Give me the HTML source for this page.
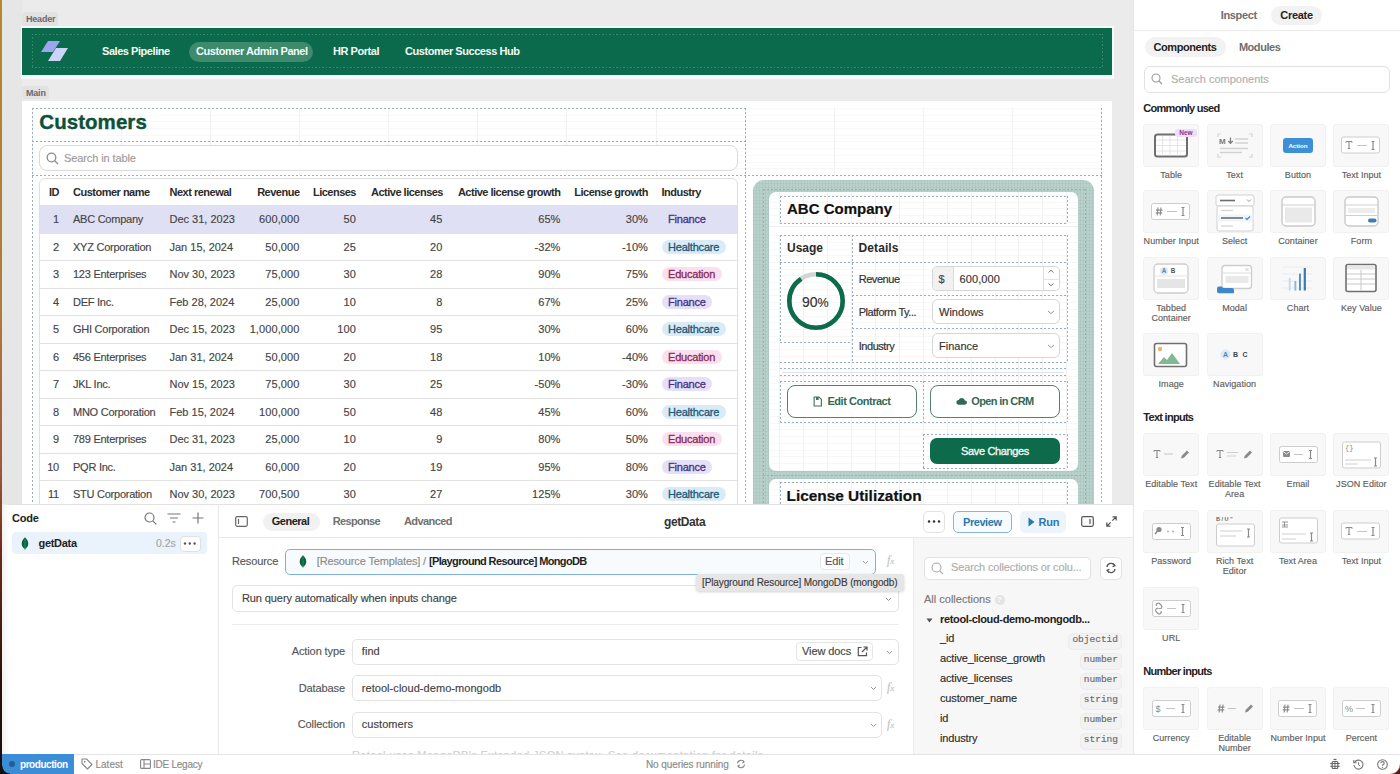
<!DOCTYPE html>
<html><head><meta charset="utf-8">
<style>
*{box-sizing:border-box;margin:0;padding:0}
html,body{width:1400px;height:774px;overflow:hidden;background:#ebebeb;font-family:"Liberation Sans",sans-serif;color:#222;position:relative}
.a{position:absolute}
.t{position:absolute;white-space:nowrap;line-height:1;-webkit-text-stroke:0.15px currentColor}
.hd{font-size:11px;font-weight:bold;color:#2b2b2b;letter-spacing:-0.5px}
.cl{font-size:11px;color:#454545;letter-spacing:-0.2px}
.r{text-align:right}
.tag{-webkit-text-stroke:0.3px currentColor;position:absolute;height:14px;border-radius:7px;font-size:11px;line-height:14px;padding-left:6px;letter-spacing:-0.2px;white-space:nowrap}
.fin{background:#e6e0f6;color:#45318a}
.hea{background:#d8ebf6;color:#1e5878}
.edu{background:#fae0ee;color:#88295a}
.dh{position:absolute;height:1px;background:repeating-linear-gradient(to right,#9ab0c1 0 2px,transparent 2px 4px)}
.dv{position:absolute;width:1px;background:repeating-linear-gradient(to bottom,#9ab0c1 0 2px,transparent 2px 4px)}
.tile{position:absolute;width:56px;height:43px;background:#f8f8f8;border-radius:3.5px;box-shadow:inset 0 0 0 1px #f1f1f1}
.tl{-webkit-text-stroke:0.15px currentColor;position:absolute;width:70px;text-align:center;font-size:9px;line-height:10px;color:#5e5e5e;letter-spacing:0.05px}
.sec{position:absolute;font-size:11px;font-weight:bold;color:#222;letter-spacing:-0.72px;white-space:nowrap;line-height:1}
.hd,.sec,[style*="font-weight:bold"]{-webkit-text-stroke:0 !important}
.t.bs{-webkit-text-stroke:0.35px currentColor !important}
.t.bs2{-webkit-text-stroke:0.2px currentColor !important}
</style></head><body>
<div class="a" style="left:2px;top:0;width:20px;height:504px;background:#e6e6e6"></div>
<div class="a" style="left:22px;top:12px;width:36px;height:14px;background:#e2e2e2;border-radius:3px"></div>
<div class="t" style="left:26px;top:15px;font-size:9px;font-weight:bold;color:#6a6a6a;letter-spacing:-0.2px">Header</div>
<div class="a" style="left:21px;top:26px;width:1093px;height:53px;background:#f4fbf8"></div>
<div class="a" style="left:22px;top:28px;width:1090px;height:47px;background:#0b6a4b"></div>
<div class="a" style="left:32px;top:34px;width:1070px;height:1px;background:repeating-linear-gradient(to right,#3a8a6c 0 1.5px,transparent 1.5px 3.5px)"></div>
<div class="a" style="left:32px;top:67px;width:1070px;height:1px;background:repeating-linear-gradient(to right,#3a8a6c 0 1.5px,transparent 1.5px 3.5px)"></div>
<div class="a" style="left:32px;top:34px;width:1px;height:34px;background:repeating-linear-gradient(to bottom,#3a8a6c 0 1.5px,transparent 1.5px 3.5px)"></div>
<div class="a" style="left:1102px;top:34px;width:1px;height:34px;background:repeating-linear-gradient(to bottom,#3a8a6c 0 1.5px,transparent 1.5px 3.5px)"></div>
<svg class="a" style="left:40px;top:40px" width="30" height="24" viewBox="0 0 30 24">
<polygon points="8,1 20,1 13,12 1,12" fill="#9ba6ef"/><polygon points="16,8 28,8 20,21 8,21" fill="#cdd3f7"/></svg>
<div class="t" style="left:102px;top:46px;font-size:11px;font-weight:bold;color:#f4faf7;letter-spacing:-0.45px">Sales Pipeline</div>
<div class="a" style="left:189px;top:42px;width:124px;height:20px;border-radius:10px;background:#3d8a6d"></div>
<div class="t" style="left:196px;top:46px;font-size:11px;font-weight:bold;color:#f4faf7;letter-spacing:-0.45px">Customer Admin Panel</div>
<div class="t" style="left:333px;top:46px;font-size:11px;font-weight:bold;color:#f4faf7;letter-spacing:-0.45px">HR Portal</div>
<div class="t" style="left:405px;top:46px;font-size:11px;font-weight:bold;color:#f4faf7;letter-spacing:-0.45px">Customer Success Hub</div>
<div class="a" style="left:22px;top:86px;width:27px;height:13px;background:#e2e2e2;border-radius:3px"></div>
<div class="t" style="left:26px;top:89px;font-size:9px;font-weight:bold;color:#6a6a6a;letter-spacing:-0.2px">Main</div>
<div class="a" style="left:22px;top:101px;width:1090px;height:403px;background:#fff;overflow:hidden">
<div class="a" style="left:10px;top:7px;width:1069.5px;height:66.5px;background-image:repeating-linear-gradient(to right,#ececec 0,#ececec 1px,transparent 1px,transparent 89.08px),repeating-linear-gradient(to bottom,#f6f6f6 0,#f6f6f6 1px,transparent 1px,transparent 6.7px);opacity:.7"></div>
<div class="dh" style="left:10px;top:7px;width:713px"></div>
<div class="dh" style="left:10px;top:40px;width:713px"></div>
<div class="dh" style="left:10px;top:73.5px;width:1070px"></div>
<div class="dv" style="left:10px;top:7px;height:400px"></div>
<div class="dv" style="left:722.5px;top:7px;height:400px"></div>
<div class="dv" style="left:1079px;top:7px;height:400px"></div>
<div class="t bs" style="left:17.299999999999997px;top:11px;font-size:20.5px;font-weight:bold;color:#0c5139;letter-spacing:0.05px">Customers</div>
<div class="a" style="left:17px;top:44px;width:699px;height:26px;border:1px solid #dadada;border-radius:8px;background:#fff"></div>
<svg class="a" style="left:24px;top:51px" width="13" height="13" viewBox="0 0 13 13"><circle cx="5.5" cy="5.5" r="4.3" fill="none" stroke="#8a8a8a" stroke-width="1.3"/><line x1="8.6" y1="8.6" x2="12" y2="12" stroke="#8a8a8a" stroke-width="1.3"/></svg>
<div class="t" style="left:42px;top:52px;font-size:11px;color:#9a9a9a;letter-spacing:-0.1px">Search in table</div>
<div class="a" style="left:17px;top:77px;width:699px;height:340px;border:1px solid #dedede;border-radius:6px;background:#fff"></div>
<div class="a" style="left:18px;top:104px;width:697px;height:27.5px;background:#e0e0f4"></div>
<div class="a" style="left:18px;top:104.0px;width:697.5px;height:1px;background:#e2e2e2"></div>
<div class="a" style="left:18px;top:131.5px;width:697.5px;height:1px;background:#e2e2e2"></div>
<div class="a" style="left:18px;top:159.0px;width:697.5px;height:1px;background:#e2e2e2"></div>
<div class="a" style="left:18px;top:186.5px;width:697.5px;height:1px;background:#e2e2e2"></div>
<div class="a" style="left:18px;top:214.0px;width:697.5px;height:1px;background:#e2e2e2"></div>
<div class="a" style="left:18px;top:241.5px;width:697.5px;height:1px;background:#e2e2e2"></div>
<div class="a" style="left:18px;top:269.0px;width:697.5px;height:1px;background:#e2e2e2"></div>
<div class="a" style="left:18px;top:296.5px;width:697.5px;height:1px;background:#e2e2e2"></div>
<div class="a" style="left:18px;top:324.0px;width:697.5px;height:1px;background:#e2e2e2"></div>
<div class="a" style="left:18px;top:351.5px;width:697.5px;height:1px;background:#e2e2e2"></div>
<div class="a" style="left:18px;top:379.0px;width:697.5px;height:1px;background:#e2e2e2"></div>
<div class="a" style="left:18px;top:406.5px;width:697.5px;height:1px;background:#e2e2e2"></div>
<div class="t hd r" style="left:-13px;top:86px;width:50px">ID</div>
<div class="t hd" style="left:51px;top:86px">Customer name</div>
<div class="t hd" style="left:147.5px;top:86px">Next renewal</div>
<div class="t hd r" style="left:178px;top:86px;width:99.5px">Revenue</div>
<div class="t hd r" style="left:278px;top:86px;width:56px">Licenses</div>
<div class="t hd r" style="left:321px;top:86px;width:100px">Active licenses</div>
<div class="t hd r" style="left:418px;top:86px;width:120.5px">Active license growth</div>
<div class="t hd r" style="left:526px;top:86px;width:100px">License growth</div>
<div class="t hd" style="left:639.5px;top:86px">Industry</div>
<div class="t cl r" style="left:-13px;top:113.0px;width:50px">1</div>
<div class="t cl" style="left:51px;top:113.0px;letter-spacing:-0.25px">ABC Company</div>
<div class="t cl" style="left:147.5px;top:113.0px;letter-spacing:0">Dec 31, 2023</div>
<div class="t cl r" style="left:178px;top:113.0px;width:99.5px;letter-spacing:0.1px">600,000</div>
<div class="t cl r" style="left:278px;top:113.0px;width:56px;letter-spacing:0.1px">50</div>
<div class="t cl r" style="left:321px;top:113.0px;width:99.5px;letter-spacing:0.1px">45</div>
<div class="t cl r" style="left:418px;top:113.0px;width:120.5px;letter-spacing:0.1px">65%</div>
<div class="t cl r" style="left:526px;top:113.0px;width:100px;letter-spacing:0.1px">30%</div>
<div class="tag fin" style="left:640px;top:111.0px;width:49.5px;background:transparent;">Finance</div>
<div class="t cl r" style="left:-13px;top:140.5px;width:50px">2</div>
<div class="t cl" style="left:51px;top:140.5px;letter-spacing:-0.25px">XYZ Corporation</div>
<div class="t cl" style="left:147.5px;top:140.5px;letter-spacing:0">Jan 15, 2024</div>
<div class="t cl r" style="left:178px;top:140.5px;width:99.5px;letter-spacing:0.1px">50,000</div>
<div class="t cl r" style="left:278px;top:140.5px;width:56px;letter-spacing:0.1px">25</div>
<div class="t cl r" style="left:321px;top:140.5px;width:99.5px;letter-spacing:0.1px">20</div>
<div class="t cl r" style="left:418px;top:140.5px;width:120.5px;letter-spacing:0.1px">-32%</div>
<div class="t cl r" style="left:526px;top:140.5px;width:100px;letter-spacing:0.1px">-10%</div>
<div class="tag hea" style="left:640px;top:138.5px;width:64px;">Healthcare</div>
<div class="t cl r" style="left:-13px;top:168.0px;width:50px">3</div>
<div class="t cl" style="left:51px;top:168.0px;letter-spacing:-0.25px">123 Enterprises</div>
<div class="t cl" style="left:147.5px;top:168.0px;letter-spacing:0">Nov 30, 2023</div>
<div class="t cl r" style="left:178px;top:168.0px;width:99.5px;letter-spacing:0.1px">75,000</div>
<div class="t cl r" style="left:278px;top:168.0px;width:56px;letter-spacing:0.1px">30</div>
<div class="t cl r" style="left:321px;top:168.0px;width:99.5px;letter-spacing:0.1px">28</div>
<div class="t cl r" style="left:418px;top:168.0px;width:120.5px;letter-spacing:0.1px">90%</div>
<div class="t cl r" style="left:526px;top:168.0px;width:100px;letter-spacing:0.1px">75%</div>
<div class="tag edu" style="left:640px;top:166.0px;width:60px;">Education</div>
<div class="t cl r" style="left:-13px;top:195.5px;width:50px">4</div>
<div class="t cl" style="left:51px;top:195.5px;letter-spacing:-0.25px">DEF Inc.</div>
<div class="t cl" style="left:147.5px;top:195.5px;letter-spacing:0">Feb 28, 2024</div>
<div class="t cl r" style="left:178px;top:195.5px;width:99.5px;letter-spacing:0.1px">25,000</div>
<div class="t cl r" style="left:278px;top:195.5px;width:56px;letter-spacing:0.1px">10</div>
<div class="t cl r" style="left:321px;top:195.5px;width:99.5px;letter-spacing:0.1px">8</div>
<div class="t cl r" style="left:418px;top:195.5px;width:120.5px;letter-spacing:0.1px">67%</div>
<div class="t cl r" style="left:526px;top:195.5px;width:100px;letter-spacing:0.1px">25%</div>
<div class="tag fin" style="left:640px;top:193.5px;width:49.5px;">Finance</div>
<div class="t cl r" style="left:-13px;top:223.0px;width:50px">5</div>
<div class="t cl" style="left:51px;top:223.0px;letter-spacing:-0.25px">GHI Corporation</div>
<div class="t cl" style="left:147.5px;top:223.0px;letter-spacing:0">Dec 15, 2023</div>
<div class="t cl r" style="left:178px;top:223.0px;width:99.5px;letter-spacing:0.1px">1,000,000</div>
<div class="t cl r" style="left:278px;top:223.0px;width:56px;letter-spacing:0.1px">100</div>
<div class="t cl r" style="left:321px;top:223.0px;width:99.5px;letter-spacing:0.1px">95</div>
<div class="t cl r" style="left:418px;top:223.0px;width:120.5px;letter-spacing:0.1px">30%</div>
<div class="t cl r" style="left:526px;top:223.0px;width:100px;letter-spacing:0.1px">60%</div>
<div class="tag hea" style="left:640px;top:221.0px;width:64px;">Healthcare</div>
<div class="t cl r" style="left:-13px;top:250.5px;width:50px">6</div>
<div class="t cl" style="left:51px;top:250.5px;letter-spacing:-0.25px">456 Enterprises</div>
<div class="t cl" style="left:147.5px;top:250.5px;letter-spacing:0">Jan 31, 2024</div>
<div class="t cl r" style="left:178px;top:250.5px;width:99.5px;letter-spacing:0.1px">50,000</div>
<div class="t cl r" style="left:278px;top:250.5px;width:56px;letter-spacing:0.1px">20</div>
<div class="t cl r" style="left:321px;top:250.5px;width:99.5px;letter-spacing:0.1px">18</div>
<div class="t cl r" style="left:418px;top:250.5px;width:120.5px;letter-spacing:0.1px">10%</div>
<div class="t cl r" style="left:526px;top:250.5px;width:100px;letter-spacing:0.1px">-40%</div>
<div class="tag edu" style="left:640px;top:248.5px;width:60px;">Education</div>
<div class="t cl r" style="left:-13px;top:278.0px;width:50px">7</div>
<div class="t cl" style="left:51px;top:278.0px;letter-spacing:-0.25px">JKL Inc.</div>
<div class="t cl" style="left:147.5px;top:278.0px;letter-spacing:0">Nov 15, 2023</div>
<div class="t cl r" style="left:178px;top:278.0px;width:99.5px;letter-spacing:0.1px">75,000</div>
<div class="t cl r" style="left:278px;top:278.0px;width:56px;letter-spacing:0.1px">30</div>
<div class="t cl r" style="left:321px;top:278.0px;width:99.5px;letter-spacing:0.1px">25</div>
<div class="t cl r" style="left:418px;top:278.0px;width:120.5px;letter-spacing:0.1px">-50%</div>
<div class="t cl r" style="left:526px;top:278.0px;width:100px;letter-spacing:0.1px">-30%</div>
<div class="tag fin" style="left:640px;top:276.0px;width:49.5px;">Finance</div>
<div class="t cl r" style="left:-13px;top:305.5px;width:50px">8</div>
<div class="t cl" style="left:51px;top:305.5px;letter-spacing:-0.25px">MNO Corporation</div>
<div class="t cl" style="left:147.5px;top:305.5px;letter-spacing:0">Feb 15, 2024</div>
<div class="t cl r" style="left:178px;top:305.5px;width:99.5px;letter-spacing:0.1px">100,000</div>
<div class="t cl r" style="left:278px;top:305.5px;width:56px;letter-spacing:0.1px">50</div>
<div class="t cl r" style="left:321px;top:305.5px;width:99.5px;letter-spacing:0.1px">48</div>
<div class="t cl r" style="left:418px;top:305.5px;width:120.5px;letter-spacing:0.1px">45%</div>
<div class="t cl r" style="left:526px;top:305.5px;width:100px;letter-spacing:0.1px">60%</div>
<div class="tag hea" style="left:640px;top:303.5px;width:64px;">Healthcare</div>
<div class="t cl r" style="left:-13px;top:333.0px;width:50px">9</div>
<div class="t cl" style="left:51px;top:333.0px;letter-spacing:-0.25px">789 Enterprises</div>
<div class="t cl" style="left:147.5px;top:333.0px;letter-spacing:0">Dec 31, 2023</div>
<div class="t cl r" style="left:178px;top:333.0px;width:99.5px;letter-spacing:0.1px">25,000</div>
<div class="t cl r" style="left:278px;top:333.0px;width:56px;letter-spacing:0.1px">10</div>
<div class="t cl r" style="left:321px;top:333.0px;width:99.5px;letter-spacing:0.1px">9</div>
<div class="t cl r" style="left:418px;top:333.0px;width:120.5px;letter-spacing:0.1px">80%</div>
<div class="t cl r" style="left:526px;top:333.0px;width:100px;letter-spacing:0.1px">50%</div>
<div class="tag edu" style="left:640px;top:331.0px;width:60px;">Education</div>
<div class="t cl r" style="left:-13px;top:360.5px;width:50px">10</div>
<div class="t cl" style="left:51px;top:360.5px;letter-spacing:-0.25px">PQR Inc.</div>
<div class="t cl" style="left:147.5px;top:360.5px;letter-spacing:0">Jan 31, 2024</div>
<div class="t cl r" style="left:178px;top:360.5px;width:99.5px;letter-spacing:0.1px">60,000</div>
<div class="t cl r" style="left:278px;top:360.5px;width:56px;letter-spacing:0.1px">20</div>
<div class="t cl r" style="left:321px;top:360.5px;width:99.5px;letter-spacing:0.1px">19</div>
<div class="t cl r" style="left:418px;top:360.5px;width:120.5px;letter-spacing:0.1px">95%</div>
<div class="t cl r" style="left:526px;top:360.5px;width:100px;letter-spacing:0.1px">80%</div>
<div class="tag fin" style="left:640px;top:358.5px;width:49.5px;">Finance</div>
<div class="t cl r" style="left:-13px;top:388.0px;width:50px">11</div>
<div class="t cl" style="left:51px;top:388.0px;letter-spacing:-0.25px">STU Corporation</div>
<div class="t cl" style="left:147.5px;top:388.0px;letter-spacing:0">Nov 30, 2023</div>
<div class="t cl r" style="left:178px;top:388.0px;width:99.5px;letter-spacing:0.1px">700,500</div>
<div class="t cl r" style="left:278px;top:388.0px;width:56px;letter-spacing:0.1px">30</div>
<div class="t cl r" style="left:321px;top:388.0px;width:99.5px;letter-spacing:0.1px">27</div>
<div class="t cl r" style="left:418px;top:388.0px;width:120.5px;letter-spacing:0.1px">125%</div>
<div class="t cl r" style="left:526px;top:388.0px;width:100px;letter-spacing:0.1px">30%</div>
<div class="tag hea" style="left:640px;top:386.0px;width:64px;">Healthcare</div>
</div><div class="a" style="left:22px;top:101px;width:1090px;height:403px;overflow:hidden">
<div class="a" style="left:731px;top:78.5px;width:341px;height:400px;background-color:#b8d1ca;border-radius:11px;background-image:repeating-linear-gradient(to right,rgba(90,130,118,.09) 0 1px,transparent 1px 3px),repeating-linear-gradient(to bottom,rgba(90,130,118,.07) 0 1px,transparent 1px 3.35px)"></div>
<div class="dh" style="left:740.5px;top:87.5px;width:322px;border-color:#7f9f98"></div>
<div class="dv" style="left:740.5px;top:87.5px;height:330px;border-color:#7f9f98"></div>
<div class="dv" style="left:1062.5px;top:87.5px;height:330px;border-color:#7f9f98"></div>
<div class="dh" style="left:740.5px;top:373.5px;width:322px;border-color:#7f9f98"></div>
<div class="a" style="left:747px;top:91px;width:308.5px;height:279px;background-color:#fff;border-radius:7px;background-image:repeating-linear-gradient(to right,#f1f1f1 0,#f1f1f1 1px,transparent 1px,transparent 23.95px),repeating-linear-gradient(to bottom,#f7f7f7 0,#f7f7f7 1px,transparent 1px,transparent 6.7px);background-position:10px 3px"></div>
<div class="a" style="left:747px;top:378px;width:308.5px;height:100px;background-color:#fff;border-radius:7px;background-image:repeating-linear-gradient(to right,#f1f1f1 0,#f1f1f1 1px,transparent 1px,transparent 23.95px),repeating-linear-gradient(to bottom,#f7f7f7 0,#f7f7f7 1px,transparent 1px,transparent 6.7px);background-position:10px 3px"></div>
<div class="dh" style="left:757.5px;top:94.5px;width:287.5px"></div>
<div class="dh" style="left:757.5px;top:121.5px;width:287.5px"></div>
<div class="dv" style="left:757.5px;top:94.5px;height:27px"></div>
<div class="dv" style="left:1045.0px;top:94.5px;height:27px"></div>
<div class="t bs2" style="left:765px;top:99.5px;font-size:15px;font-weight:bold;color:#111;letter-spacing:0">ABC Company</div>
<div class="a" style="left:747px;top:122.5px;width:308.5px;height:10px;background:#fff"></div>
<div class="a" style="left:747px;top:124.5px;width:308.5px;height:1px;background:#f0f0f0"></div>
<div class="dh" style="left:757.5px;top:133.5px;width:287.5px"></div>
<div class="dh" style="left:757.5px;top:260.5px;width:287.5px"></div>
<div class="dv" style="left:757.5px;top:133.5px;height:107px"></div>
<div class="dv" style="left:829.5px;top:133.5px;height:127.5px"></div>
<div class="dv" style="left:1044.5px;top:133.5px;height:127.5px"></div>
<div class="dh" style="left:757.5px;top:160.5px;width:287.5px"></div>
<div class="dh" style="left:757.5px;top:240.5px;width:72px"></div>
<div class="dh" style="left:829.5px;top:194px;width:215px"></div>
<div class="dh" style="left:829.5px;top:227.2px;width:215px"></div>
<div class="t" style="left:765px;top:141px;font-size:12px;font-weight:bold;color:#2a2a2a">Usage</div>
<div class="t" style="left:836.5px;top:141px;font-size:12px;font-weight:bold;color:#2a2a2a;letter-spacing:0.1px">Details</div>
<svg class="a" style="left:763px;top:169px" width="62" height="62" viewBox="0 0 62 62">
<circle cx="31" cy="31" r="26.7" fill="none" stroke="#d4d4d4" stroke-width="4.6"/>
<circle cx="31" cy="31" r="26.7" fill="none" stroke="#0c6b4a" stroke-width="4.6" stroke-dasharray="151 200" transform="rotate(-90 31 31)"/></svg>
<div class="t" style="left:780px;top:194px;font-size:14px;color:#333">90<span style="font-size:12.5px">%</span></div>
<div class="t bs2" style="left:836.7px;top:172.5px;font-size:11px;color:#333;letter-spacing:-0.45px">Revenue</div>
<div class="t bs2" style="left:836.7px;top:206px;font-size:11px;color:#333;letter-spacing:-0.45px">Platform Ty...</div>
<div class="t bs2" style="left:836.7px;top:239.5px;font-size:11px;color:#333;letter-spacing:-0.45px">Industry</div>
<div class="a" style="left:910px;top:164.5px;width:127.5px;height:25.5px;border:1px solid #d6d6d6;border-radius:5px;background:#fff;overflow:hidden"><div class="a" style="left:0;top:0;width:21px;height:24px;background:#f1f1f1;border-right:1px solid #dcdcdc"></div><div class="a" style="left:110px;top:0;width:1px;height:24px;background:#dcdcdc"></div><div class="a" style="left:110px;top:12px;width:18px;height:1px;background:#e4e4e4"></div></div>
<div class="t" style="left:916.5px;top:172.5px;font-size:11px;color:#444">$</div>
<div class="t" style="left:937.5px;top:172.5px;font-size:11px;color:#333;letter-spacing:0.1px">600,000</div>
<svg class="a" style="left:1025px;top:167px" width="8" height="20" viewBox="0 0 8 20"><path d="M1.5 4.5 L4 2.2 L6.5 4.5" fill="none" stroke="#777" stroke-width="1"/><path d="M1.5 15.5 L4 17.8 L6.5 15.5" fill="none" stroke="#777" stroke-width="1"/></svg>
<div class="a" style="left:909.5px;top:197.5px;width:128px;height:25.5px;border:1px solid #d6d6d6;border-radius:6px;background:#fff"></div>
<div class="t" style="left:917px;top:205.5px;font-size:11px;color:#333;letter-spacing:0">Windows</div>
<svg class="a" style="left:1025px;top:208.5px" width="8" height="5" viewBox="0 0 8 5"><path d="M1 1 L4 3.5 L7 1" fill="none" stroke="#999" stroke-width="1"/></svg>
<div class="a" style="left:909.5px;top:231.5px;width:128px;height:25.5px;border:1px solid #d6d6d6;border-radius:6px;background:#fff"></div>
<div class="t" style="left:917px;top:239.5px;font-size:11px;color:#333;letter-spacing:0">Finance</div>
<svg class="a" style="left:1025px;top:242.5px" width="8" height="5" viewBox="0 0 8 5"><path d="M1 1 L4 3.5 L7 1" fill="none" stroke="#999" stroke-width="1"/></svg>
<div class="dh" style="left:757.5px;top:267px;width:287.5px"></div>
<div class="a" style="left:760px;top:270.5px;width:282px;height:1px;background:#dde3e6"></div>
<div class="dh" style="left:757.5px;top:273.7px;width:287.5px"></div>
<div class="dh" style="left:757.5px;top:280px;width:287.5px"></div>
<div class="dh" style="left:757.5px;top:320.5px;width:287.5px"></div>
<div class="dv" style="left:757.5px;top:280px;height:40.5px"></div>
<div class="dv" style="left:1045.0px;top:280px;height:40.5px"></div>
<div class="dv" style="left:901px;top:280px;height:40.5px"></div>
<div class="a" style="left:764.5px;top:284px;width:130px;height:33px;border:1.6px solid #55806f;border-radius:8px;background:#fff"></div>
<div class="a" style="left:908px;top:284px;width:130px;height:33px;border:1.6px solid #55806f;border-radius:8px;background:#fff"></div>
<div class="t" style="left:805.5px;top:295px;font-size:11px;font-weight:bold;color:#2f6a55;letter-spacing:-0.47px">Edit Contract</div>
<div class="t" style="left:949.3px;top:295px;font-size:11px;font-weight:bold;color:#2f6a55;letter-spacing:-0.62px">Open in CRM</div>
<svg class="a" style="left:790.6px;top:295.3px" width="9.5" height="11" viewBox="0 0 11 13"><path d="M1.2 1.2 H7 L9.8 4 V11.8 H1.2 Z" fill="none" stroke="#3c6f5c" stroke-width="1.3" stroke-linejoin="round"/><rect x="3.5" y="1.2" width="3" height="3.5" fill="#3c6f5c"/></svg>
<svg class="a" style="left:933.5px;top:296.3px" width="11" height="8.5" viewBox="0 0 13 10"><path d="M3 9 H10.5 A2.5 2.5 0 0 0 10.5 4 A3.8 3.8 0 0 0 3.2 3.6 A2.7 2.7 0 0 0 3 9 Z" fill="#2f6a55"/></svg>
<div class="dh" style="left:901px;top:332.5px;width:144px"></div>
<div class="dh" style="left:901px;top:366.5px;width:144px"></div>
<div class="dv" style="left:901px;top:332.5px;height:34px"></div>
<div class="dv" style="left:1045px;top:332.5px;height:34px"></div>
<div class="a" style="left:908px;top:336.5px;width:130px;height:26px;background:#0d6a4b;border-radius:7px"></div>
<div class="t bs" style="left:939px;top:344.5px;font-size:11px;color:#f2f8f5;letter-spacing:-0.35px">Save Changes</div>
<div class="dh" style="left:757.5px;top:381px;width:287.5px"></div>
<div class="dh" style="left:757.5px;top:421px;width:287.5px"></div>
<div class="dv" style="left:757.5px;top:381px;height:40px"></div>
<div class="dv" style="left:1045.0px;top:381px;height:40px"></div>
<div class="t bs2" style="left:764.5px;top:386.5px;font-size:15.4px;font-weight:bold;color:#111;letter-spacing:0">License Utilization</div>
</div><div class="a" style="left:1133px;top:0;width:267px;height:754px;background:#fff;overflow:hidden">
<div class="a" style="left:0;top:0;width:1px;height:754px;background:#e6e6e6"></div>
<div class="t" style="left:87.70000000000005px;top:9.5px;font-size:11px;font-weight:bold;color:#6e6e6e;letter-spacing:-0.35px">Inspect</div>
<div class="a" style="left:137.5px;top:5.5px;width:51.5px;height:19.5px;border-radius:10px;background:#f2f2f2"></div>
<div class="t" style="left:147.29999999999995px;top:9.5px;font-size:11px;font-weight:bold;color:#222;letter-spacing:-0.3px">Create</div>
<div class="a" style="left:0px;top:29.5px;width:267px;height:1px;background:#ececec"></div>
<div class="a" style="left:11.5px;top:37px;width:81px;height:20px;border-radius:10px;background:#f2f2f2"></div>
<div class="t" style="left:20.59999999999991px;top:42px;font-size:11px;font-weight:bold;color:#222;letter-spacing:-0.45px">Components</div>
<div class="t" style="left:105.90000000000009px;top:42px;font-size:11px;font-weight:bold;color:#6e6e6e;letter-spacing:-0.45px">Modules</div>
<div class="a" style="left:10.5px;top:66px;width:246px;height:26.5px;border:1px solid #e2e2e2;border-radius:6px;background:#fff"></div>
<svg class="a" style="left:18px;top:73px" width="12" height="12" viewBox="0 0 12 12"><circle cx="5" cy="5" r="4" fill="none" stroke="#999" stroke-width="1.1"/><line x1="8" y1="8" x2="11" y2="11" stroke="#999" stroke-width="1.1"/></svg>
<div class="t" style="left:38px;top:74px;font-size:11px;color:#b0b0b0;letter-spacing:0">Search components</div>
<div class="sec" style="left:10.299999999999955px;top:102.5px">Commonly used</div>
<div class="tile" style="left:10.200000000000045px;top:123.5px"></div>
<svg class="a" style="left:10.200000000000045px;top:123.5px" width="56" height="43" viewBox="0 0 56 43"><rect x="12" y="10.5" width="32" height="22" rx="2.5" fill="#fff" stroke="#6f6f6f" stroke-width="2"/><path d="M19.5 12 v19.5" stroke="#dedede" stroke-width="0.8"/><path d="M27 12 v19.5" stroke="#dedede" stroke-width="0.8"/><path d="M34.5 12 v19.5" stroke="#dedede" stroke-width="0.8"/><path d="M13 16 h30" stroke="#dedede" stroke-width="0.8"/><path d="M13 21.5 h30" stroke="#dedede" stroke-width="0.8"/><path d="M13 27 h30" stroke="#dedede" stroke-width="0.8"/><rect x="32" y="5" width="22" height="8" rx="3" fill="#f3dcf5"/><text x="43" y="11.3" font-size="6.5" font-weight="bold" fill="#7a3e94" text-anchor="middle" font-family="Liberation Sans">New</text></svg>
<div class="tl" style="left:3.2000000000000455px;top:169.5px">Table</div>
<div class="tile" style="left:73.59999999999991px;top:123.5px"></div>
<svg class="a" style="left:73.59999999999991px;top:123.5px" width="56" height="43" viewBox="0 0 56 43"><path d="M11 13 v-3 h3 M42 10 h3 v3 M11 30 v3 h3 M42 33 h3 v-3" stroke="#d5d5d5" stroke-width="1.2" fill="none"/><text x="12" y="19.5" font-size="8" font-weight="bold" fill="#7a7a7a" font-family="Liberation Sans">M</text><path d="M23.5 13.5 v5.5 M21.3 17 l2.2 2.3 l2.2 -2.3" stroke="#7a7a7a" stroke-width="1.2" fill="none"/><path d="M28 15 h13 M28 19 h13 M13 24.5 h28 M13 28.5 h22" stroke="#d2d2d2" stroke-width="1.3"/></svg>
<div class="tl" style="left:66.59999999999991px;top:169.5px">Text</div>
<div class="tile" style="left:137px;top:123.5px"></div>
<svg class="a" style="left:137px;top:123.5px" width="56" height="43" viewBox="0 0 56 43"><rect x="13" y="14" width="30" height="15" rx="3" fill="#3f8fd8"/><text x="28" y="23.6" font-size="6.2" font-weight="bold" fill="#fff" text-anchor="middle" font-family="Liberation Sans">Action</text></svg>
<div class="tl" style="left:130px;top:169.5px">Button</div>
<div class="tile" style="left:200.4000000000001px;top:123.5px"></div>
<svg class="a" style="left:200.4000000000001px;top:123.5px" width="56" height="43" viewBox="0 0 56 43"><rect x="8.5" y="13" width="38" height="16" rx="2" fill="#fff" stroke="#cdcdcd" stroke-width="1" /><path d="M13 17.5 h6 M16 17.5 v7 M14.8 24.5 h2.4" stroke="#8a8a8a" stroke-width="1.1" fill="none"/><path d="M13 17.5 v1.3 M19 17.5 v1.3" stroke="#8a8a8a" stroke-width="1"/><path d="M24 21.5 h10" stroke="#c4c4c4" stroke-width="1"/><path d="M38.5 17.5 h3 M40.0 17.5 v8 M38.5 25.5 h3" stroke="#8a8a8a" stroke-width="1.2" fill="none"/></svg>
<div class="tl" style="left:193.4000000000001px;top:169.5px">Text Input</div>
<div class="tile" style="left:10.200000000000045px;top:190px"></div>
<svg class="a" style="left:10.200000000000045px;top:190px" width="56" height="43" viewBox="0 0 56 43"><rect x="8.5" y="13.5" width="38" height="16" rx="2" fill="#fff" stroke="#cdcdcd" stroke-width="1" /><path d="M15 17.5 L14.2 25.5 M18 17.5 L17.2 25.5 M13 20.1 h6.5 M12.7 22.9 h6.5" stroke="#8a8a8a" stroke-width="1.1" fill="none"/><path d="M24 21.5 h10" stroke="#c4c4c4" stroke-width="1"/><path d="M38.5 17.5 h3 M40.0 17.5 v8 M38.5 25.5 h3" stroke="#8a8a8a" stroke-width="1.2" fill="none"/></svg>
<div class="tl" style="left:3.2000000000000455px;top:236px">Number Input</div>
<div class="tile" style="left:73.59999999999991px;top:190px"></div>
<svg class="a" style="left:73.59999999999991px;top:190px" width="56" height="43" viewBox="0 0 56 43"><rect x="9" y="5" width="38" height="11" rx="2" fill="#fff" stroke="#d0d0d0"/><path d="M13 10.5 h15" stroke="#6d6d6d" stroke-width="1.6"/><path d="M40 9.5 l2 2 l2 -2" stroke="#999" fill="none"/><rect x="10" y="16" width="36" height="25" rx="2" fill="#fff" stroke="#d0d0d0"/><path d="M14 20.5 h12" stroke="#d5d5d5" stroke-width="1.3"/><rect x="10.5" y="24.5" width="35" height="7" fill="#eef5fb"/><path d="M14 28 h22" stroke="#6d6d6d" stroke-width="1.6"/><path d="M38.5 28 l1.5 1.5 l3 -3" stroke="#4a85b8" stroke-width="1.2" fill="none"/><path d="M14 36 h12" stroke="#d5d5d5" stroke-width="1.3"/></svg>
<div class="tl" style="left:66.59999999999991px;top:236px">Select</div>
<div class="tile" style="left:137px;top:190px"></div>
<svg class="a" style="left:137px;top:190px" width="56" height="43" viewBox="0 0 56 43"><rect x="12" y="7" width="33" height="29" rx="4" fill="#fff" stroke="#c9c9c9" stroke-width="1.4"/><path d="M12.5 15 h32" stroke="#cfcfcf" stroke-width="1.2"/><rect x="15" y="17.5" width="27" height="15" fill="#e9e9e9"/></svg>
<div class="tl" style="left:130px;top:236px">Container</div>
<div class="tile" style="left:200.4000000000001px;top:190px"></div>
<svg class="a" style="left:200.4000000000001px;top:190px" width="56" height="43" viewBox="0 0 56 43"><rect x="12" y="7" width="33" height="29" rx="4" fill="#fff" stroke="#c9c9c9" stroke-width="1.4"/><path d="M12.5 15 h32 M12.5 25.5 h32" stroke="#cfcfcf" stroke-width="1.2"/><rect x="15" y="18" width="27" height="5" fill="#ececec"/><rect x="35" y="28.5" width="8.5" height="4" rx="2" fill="#3d7fb3"/></svg>
<div class="tl" style="left:193.4000000000001px;top:236px">Form</div>
<div class="tile" style="left:10.200000000000045px;top:256.5px"></div>
<svg class="a" style="left:10.200000000000045px;top:256.5px" width="56" height="43" viewBox="0 0 56 43"><rect x="11" y="7" width="34" height="29" rx="4" fill="#fff" stroke="#cdcdcd" stroke-width="1.3"/><circle cx="21" cy="14" r="4" fill="#d9eaf7"/><text x="21" y="16.4" font-size="6.3" font-weight="bold" fill="#4b88bb" text-anchor="middle" font-family="Liberation Sans">A</text><text x="30" y="16.4" font-size="6.3" font-weight="bold" fill="#555" text-anchor="middle" font-family="Liberation Sans">B</text><path d="M11.5 19 h33" stroke="#e3e3e3"/><rect x="14" y="22" width="28" height="9" fill="#e5e5e5"/></svg>
<div class="tl" style="left:3.2000000000000455px;top:302.5px">Tabbed<br>Container</div>
<div class="tile" style="left:73.59999999999991px;top:256.5px"></div>
<svg class="a" style="left:73.59999999999991px;top:256.5px" width="56" height="43" viewBox="0 0 56 43"><rect x="15" y="8.5" width="29.5" height="23" rx="3" fill="#fff" stroke="#cdcdcd" stroke-width="1.3"/><path d="M38.5 11 l3 3 M41.5 11 l-3 3" stroke="#ccc"/><path d="M15.5 16 h28.5" stroke="#dcdcdc"/><rect x="18.5" y="19" width="23" height="7" fill="#e9e9e9"/><path d="M10 31.5 q0 -2 2 -2 h2.5 l1.5 1.5 h9 q2 0 2 2 v3.2 h-15 q-2 0 -2 -2 z" fill="#3d86cc"/></svg>
<div class="tl" style="left:66.59999999999991px;top:302.5px">Modal</div>
<div class="tile" style="left:137px;top:256.5px"></div>
<svg class="a" style="left:137px;top:256.5px" width="56" height="43" viewBox="0 0 56 43"><path d="M12 10 h30 M12 17 h30 M12 24 h30 M12 31 h30" stroke="#e6eef5" stroke-width="1"/><rect x="18.8" y="21" width="1.9" height="12.5" fill="#c4dbee"/><rect x="24.4" y="24" width="1.9" height="9.5" fill="#8ab8dc"/><rect x="29" y="16.7" width="1.9" height="16.8" fill="#4f8cc2"/><rect x="33.7" y="11" width="2.2" height="22.5" fill="#3a78b0"/></svg>
<div class="tl" style="left:130px;top:302.5px">Chart</div>
<div class="tile" style="left:200.4000000000001px;top:256.5px"></div>
<svg class="a" style="left:200.4000000000001px;top:256.5px" width="56" height="43" viewBox="0 0 56 43"><rect x="13" y="7.5" width="30" height="27" rx="2" fill="#fff" stroke="#6f6f6f" stroke-width="1.6"/><rect x="14" y="8.5" width="28" height="4" fill="#e8e8e8"/><path d="M14 17 h28 M14 22 h28 M14 27 h28" stroke="#c9c9c9" stroke-width="1"/><path d="M28 13 v20.5" stroke="#c9c9c9"/></svg>
<div class="tl" style="left:193.4000000000001px;top:302.5px">Key Value</div>
<div class="tile" style="left:10.200000000000045px;top:333px"></div>
<svg class="a" style="left:10.200000000000045px;top:333px" width="56" height="43" viewBox="0 0 56 43"><rect x="11.5" y="10.5" width="32" height="23" rx="2" fill="#fff" stroke="#6f6f6f" stroke-width="1.6"/><circle cx="17" cy="16" r="2.2" fill="#e4b86a"/><path d="M15 31 L21 24 L24 27 L29 20 L37 31 Z" fill="#7fba92"/></svg>
<div class="tl" style="left:3.2000000000000455px;top:379px">Image</div>
<div class="tile" style="left:73.59999999999991px;top:333px"></div>
<svg class="a" style="left:73.59999999999991px;top:333px" width="56" height="43" viewBox="0 0 56 43"><circle cx="18.5" cy="21.5" r="5" fill="#dbeaf6"/><text x="18.5" y="24" font-size="7" font-weight="bold" fill="#4b88bb" text-anchor="middle" font-family="Liberation Sans">A</text><text x="28.5" y="24" font-size="7" font-weight="bold" fill="#444" text-anchor="middle" font-family="Liberation Sans">B</text><text x="38" y="24" font-size="7" font-weight="bold" fill="#444" text-anchor="middle" font-family="Liberation Sans">C</text></svg>
<div class="tl" style="left:66.59999999999991px;top:379px">Navigation</div>
<div class="sec" style="left:10.299999999999955px;top:412px">Text inputs</div>
<div class="tile" style="left:10.200000000000045px;top:433.3px"></div>
<svg class="a" style="left:10.200000000000045px;top:433.3px" width="56" height="43" viewBox="0 0 56 43"><path d="M11 17.5 h6 M14 17.5 v7 M12.8 24.5 h2.4" stroke="#8a8a8a" stroke-width="1.1" fill="none"/><path d="M11 17.5 v1.3 M17 17.5 v1.3" stroke="#8a8a8a" stroke-width="1"/><path d="M21 21 h9" stroke="#c4c4c4" stroke-width="1"/><path d="M38 25.5 L38.8 22.8 L44 17.6 L46 19.6 L40.8 24.8 Z" fill="#8a8a8a"/></svg>
<div class="tl" style="left:3.2000000000000455px;top:479.3px">Editable Text</div>
<div class="tile" style="left:73.59999999999991px;top:433.3px"></div>
<svg class="a" style="left:73.59999999999991px;top:433.3px" width="56" height="43" viewBox="0 0 56 43"><path d="M10 17.5 h6 M13 17.5 v7 M11.8 24.5 h2.4" stroke="#8a8a8a" stroke-width="1.1" fill="none"/><path d="M10 17.5 v1.3 M16 17.5 v1.3" stroke="#8a8a8a" stroke-width="1"/><path d="M20 19.5 h11 M20 23 h9" stroke="#cfcfcf" stroke-width="1.2"/><path d="M37 25.5 L37.8 22.8 L43 17.6 L45 19.6 L39.8 24.8 Z" fill="#8a8a8a"/></svg>
<div class="tl" style="left:66.59999999999991px;top:479.3px">Editable Text<br>Area</div>
<div class="tile" style="left:137px;top:433.3px"></div>
<svg class="a" style="left:137px;top:433.3px" width="56" height="43" viewBox="0 0 56 43"><rect x="9.5" y="13.5" width="38" height="16" rx="2" fill="#fff" stroke="#cdcdcd" stroke-width="1" /><rect x="13" y="18" width="7" height="6" rx="1" fill="#8a8a8a"/><path d="M13 18.5 l3.5 2.5 l3.5 -2.5" stroke="#fff" stroke-width="0.8" fill="none"/><path d="M24 21.5 h9" stroke="#c4c4c4" stroke-width="1"/><path d="M39 17.5 h3 M40.5 17.5 v8 M39 25.5 h3" stroke="#8a8a8a" stroke-width="1.2" fill="none"/></svg>
<div class="tl" style="left:130px;top:479.3px">Email</div>
<div class="tile" style="left:200.4000000000001px;top:433.3px"></div>
<svg class="a" style="left:200.4000000000001px;top:433.3px" width="56" height="43" viewBox="0 0 56 43"><rect x="9.5" y="9" width="38" height="26" rx="2" fill="#fff" stroke="#cdcdcd"/><text x="12" y="17" font-size="7" fill="#8a8a8a" font-family="Liberation Mono">{}</text><path d="M12 27 h26 M12 31 h13" stroke="#cfcfcf" stroke-width="1.2"/><path d="M41 25 h3 M42.5 25 v8 M41 33 h3" stroke="#8a8a8a" stroke-width="1.2" fill="none"/></svg>
<div class="tl" style="left:193.4000000000001px;top:479.3px">JSON Editor</div>
<div class="tile" style="left:10.200000000000045px;top:510px"></div>
<svg class="a" style="left:10.200000000000045px;top:510px" width="56" height="43" viewBox="0 0 56 43"><rect x="9.5" y="13.5" width="38" height="16" rx="2" fill="#fff" stroke="#cdcdcd" stroke-width="1" /><circle cx="16" cy="19.5" r="2.6" fill="#8a8a8a"/><path d="M14.5 21 l-2.5 3" stroke="#8a8a8a" stroke-width="1.5"/><circle cx="25" cy="21.5" r="0.9" fill="#aaa"/><circle cx="30" cy="21.5" r="0.9" fill="#aaa"/><path d="M38 17.5 h3 M39.5 17.5 v8 M38 25.5 h3" stroke="#8a8a8a" stroke-width="1.2" fill="none"/></svg>
<div class="tl" style="left:3.2000000000000455px;top:556px">Password</div>
<div class="tile" style="left:73.59999999999991px;top:510px"></div>
<svg class="a" style="left:73.59999999999991px;top:510px" width="56" height="43" viewBox="0 0 56 43"><text x="9" y="11" font-size="5.5" font-weight="bold" fill="#666" font-family="Liberation Sans">B  /  U  ”</text><rect x="9.5" y="14" width="38" height="22" rx="2" fill="#fff" stroke="#cdcdcd"/><path d="M13 21 h22 M13 26 h16" stroke="#cfcfcf" stroke-width="1.2"/><path d="M40 19 h3 M41.5 19 v8 M40 27 h3" stroke="#8a8a8a" stroke-width="1.2" fill="none"/></svg>
<div class="tl" style="left:66.59999999999991px;top:556px">Rich Text<br>Editor</div>
<div class="tile" style="left:137px;top:510px"></div>
<svg class="a" style="left:137px;top:510px" width="56" height="43" viewBox="0 0 56 43"><rect x="9.5" y="8" width="38" height="25" rx="2" fill="#fff" stroke="#cdcdcd"/><path d="M12 12 h6 M14.5 12 v4.5 M12 15 h6 M12 17 h6" stroke="#8a8a8a" stroke-width="0.9"/><path d="M12 24 h24 M12 29 h14" stroke="#cfcfcf" stroke-width="1.2"/><path d="M40 23 h3 M41.5 23 v8 M40 31 h3" stroke="#8a8a8a" stroke-width="1.2" fill="none"/></svg>
<div class="tl" style="left:130px;top:556px">Text Area</div>
<div class="tile" style="left:200.4000000000001px;top:510px"></div>
<svg class="a" style="left:200.4000000000001px;top:510px" width="56" height="43" viewBox="0 0 56 43"><rect x="8.5" y="13" width="38" height="16" rx="2" fill="#fff" stroke="#cdcdcd" stroke-width="1" /><path d="M13 17.5 h6 M16 17.5 v7 M14.8 24.5 h2.4" stroke="#8a8a8a" stroke-width="1.1" fill="none"/><path d="M13 17.5 v1.3 M19 17.5 v1.3" stroke="#8a8a8a" stroke-width="1"/><path d="M24 21.5 h10" stroke="#c4c4c4" stroke-width="1"/><path d="M38.5 17.5 h3 M40.0 17.5 v8 M38.5 25.5 h3" stroke="#8a8a8a" stroke-width="1.2" fill="none"/></svg>
<div class="tl" style="left:193.4000000000001px;top:556px">Text Input</div>
<div class="tile" style="left:10.200000000000045px;top:587px"></div>
<svg class="a" style="left:10.200000000000045px;top:587px" width="56" height="43" viewBox="0 0 56 43"><rect x="9.5" y="13.5" width="38" height="16" rx="2" fill="#fff" stroke="#cdcdcd" stroke-width="1" /><path d="M13.5 19 a2 2 0 0 1 3 -2.5 l2 2 a2 2 0 0 1 -2.5 3 M18 24 a2 2 0 0 1 -3 2.5 l-2 -2 a2 2 0 0 1 2.5 -3" stroke="#8a8a8a" stroke-width="1.1" fill="none"/><path d="M24 21.5 h9" stroke="#c4c4c4" stroke-width="1"/><path d="M38.5 17.5 h3 M40.0 17.5 v8 M38.5 25.5 h3" stroke="#8a8a8a" stroke-width="1.2" fill="none"/></svg>
<div class="tl" style="left:3.2000000000000455px;top:633px">URL</div>
<div class="sec" style="left:10.299999999999955px;top:665.5px">Number inputs</div>
<div class="tile" style="left:10.200000000000045px;top:686.5px"></div>
<svg class="a" style="left:10.200000000000045px;top:686.5px" width="56" height="43" viewBox="0 0 56 43"><rect x="9.5" y="13.5" width="38" height="16" rx="2" fill="#fff" stroke="#cdcdcd" stroke-width="1" /><text x="12.5" y="25" font-size="9" fill="#8a8a8a" font-family="Liberation Sans">$</text><path d="M23 21.5 h9" stroke="#c4c4c4" stroke-width="1"/><path d="M38.5 17.5 h3 M40.0 17.5 v8 M38.5 25.5 h3" stroke="#8a8a8a" stroke-width="1.2" fill="none"/></svg>
<div class="tl" style="left:3.2000000000000455px;top:732.5px">Currency</div>
<div class="tile" style="left:73.59999999999991px;top:686.5px"></div>
<svg class="a" style="left:73.59999999999991px;top:686.5px" width="56" height="43" viewBox="0 0 56 43"><path d="M13 17.5 L12.2 25.5 M16 17.5 L15.2 25.5 M11 20.1 h6.5 M10.7 22.9 h6.5" stroke="#8a8a8a" stroke-width="1.1" fill="none"/><path d="M21 21.5 h8" stroke="#c4c4c4" stroke-width="1"/><path d="M38 25.5 L38.8 22.8 L44 17.6 L46 19.6 L40.8 24.8 Z" fill="#8a8a8a"/></svg>
<div class="tl" style="left:66.59999999999991px;top:732.5px">Editable<br>Number</div>
<div class="tile" style="left:137px;top:686.5px"></div>
<svg class="a" style="left:137px;top:686.5px" width="56" height="43" viewBox="0 0 56 43"><rect x="8.5" y="13.5" width="38" height="16" rx="2" fill="#fff" stroke="#cdcdcd" stroke-width="1" /><path d="M15 17.5 L14.2 25.5 M18 17.5 L17.2 25.5 M13 20.1 h6.5 M12.7 22.9 h6.5" stroke="#8a8a8a" stroke-width="1.1" fill="none"/><path d="M24 21.5 h10" stroke="#c4c4c4" stroke-width="1"/><path d="M38.5 17.5 h3 M40.0 17.5 v8 M38.5 25.5 h3" stroke="#8a8a8a" stroke-width="1.2" fill="none"/></svg>
<div class="tl" style="left:130px;top:732.5px">Number Input</div>
<div class="tile" style="left:200.4000000000001px;top:686.5px"></div>
<svg class="a" style="left:200.4000000000001px;top:686.5px" width="56" height="43" viewBox="0 0 56 43"><rect x="9.5" y="13.5" width="38" height="16" rx="2" fill="#fff" stroke="#cdcdcd" stroke-width="1" /><text x="12" y="25" font-size="9" fill="#8a8a8a" font-family="Liberation Sans">%</text><path d="M23 21.5 h9" stroke="#c4c4c4" stroke-width="1"/><path d="M38.5 17.5 h3 M40.0 17.5 v8 M38.5 25.5 h3" stroke="#8a8a8a" stroke-width="1.2" fill="none"/></svg>
<div class="tl" style="left:193.4000000000001px;top:732.5px">Percent</div>
</div><div class="a" style="left:2px;top:504px;width:1131px;height:250px;background:#fff;overflow:hidden">
<div class="a" style="left:0;top:0;width:1131px;height:1px;background:#e2e2e2"></div>
<div class="a" style="left:216px;top:0px;width:1px;height:250px;background:#e8e8e8"></div>
<div class="t" style="left:10px;top:9.200000000000045px;font-size:11px;font-weight:bold;color:#222;letter-spacing:-0.2px">Code</div>
<svg class="a" style="left:142px;top:8px" width="13" height="13" viewBox="0 0 13 13"><circle cx="5.5" cy="5.5" r="4.5" fill="none" stroke="#777" stroke-width="1.2"/><line x1="8.8" y1="8.8" x2="12.3" y2="12.3" stroke="#777" stroke-width="1.2"/></svg>
<svg class="a" style="left:165px;top:8px" width="14" height="12" viewBox="0 0 14 12"><path d="M0.5 2 h13 M3 6 h8 M5.5 10 h3" stroke="#777" stroke-width="1.2"/></svg>
<svg class="a" style="left:190px;top:8px" width="12" height="12" viewBox="0 0 12 12"><path d="M6 0.5 v11 M0.5 6 h11" stroke="#777" stroke-width="1.2"/></svg>
<div class="a" style="left:10px;top:28px;width:195px;height:21.5px;background:#eaf3fb;border-radius:4px"></div>
<svg class="a" style="left:19px;top:33px" width="8" height="13" viewBox="0 0 8 13"><path d="M4 0.3 C6.8 2.8 7.6 5.5 7.2 7.8 C6.8 10 5.4 11.2 4.3 11.7 L4.1 12.9 L3.8 12.9 L3.7 11.7 C2.5 11.2 1.1 10 0.8 7.8 C0.4 5.5 1.2 2.8 4 0.3 Z" fill="#10613f"/><path d="M4 1.5 V12" stroke="#3aa36b" stroke-width="0.6"/></svg>
<div class="t" style="left:36.5px;top:34px;font-size:11px;font-weight:bold;color:#222;letter-spacing:-0.3px">getData</div>
<div class="t" style="left:154px;top:34px;font-size:10.5px;color:#a5a5a5">0.2s</div>
<div class="a" style="left:178px;top:31.5px;width:20.5px;height:16px;background:#fff;border:1px solid #e0e0e0;border-radius:4px"></div>
<svg class="a" style="left:181px;top:38px" width="14" height="3" viewBox="0 0 14 3"><circle cx="2" cy="1.5" r="1.2" fill="#555"/><circle cx="6.8" cy="1.5" r="1.2" fill="#555"/><circle cx="11.6" cy="1.5" r="1.2" fill="#555"/></svg>
<div class="a" style="left:216px;top:33px;width:915px;height:1px;background:#e8e8e8"></div>
<svg class="a" style="left:233px;top:12px" width="13" height="11" viewBox="0 0 13 11"><rect x="0.7" y="0.7" width="11.6" height="9.6" rx="1.5" fill="none" stroke="#666" stroke-width="1.2"/><path d="M3.5 3 v5" stroke="#666" stroke-width="1.2"/></svg>
<div class="a" style="left:260.5px;top:8.5px;width:57px;height:18px;border-radius:9px;background:#f1f1f1"></div>
<div class="t" style="left:269.8px;top:12px;font-size:11px;font-weight:bold;color:#222;letter-spacing:-0.5px">General</div>
<div class="t" style="left:330.7px;top:12px;font-size:11px;font-weight:bold;color:#707070;letter-spacing:-0.65px">Response</div>
<div class="t" style="left:401.9px;top:12px;font-size:11px;font-weight:bold;color:#707070;letter-spacing:-0.56px">Advanced</div>
<div class="t" style="left:662px;top:12px;font-size:12px;font-weight:bold;color:#333;letter-spacing:-0.41px">getData</div>
<div class="a" style="left:920.5px;top:6.5px;width:22px;height:22px;background:#fff;border:1px solid #e3e3e3;border-radius:5px"></div>
<svg class="a" style="left:924.5px;top:16px" width="14" height="3" viewBox="0 0 14 3"><circle cx="2" cy="1.5" r="1.25" fill="#333"/><circle cx="7" cy="1.5" r="1.25" fill="#333"/><circle cx="12" cy="1.5" r="1.25" fill="#333"/></svg>
<div class="a" style="left:950.5px;top:6.5px;width:59px;height:22.5px;background:#f6fbfe;border:1px solid #86b9d6;border-radius:5px"></div>
<div class="t" style="left:961px;top:12.5px;font-size:11px;font-weight:bold;color:#2b78ad;letter-spacing:-0.44px">Preview</div>
<div class="a" style="left:1017.5px;top:6.5px;width:46px;height:22.5px;background:#edf5fb;border-radius:5px"></div>
<svg class="a" style="left:1026px;top:13px" width="7" height="10" viewBox="0 0 7 10"><path d="M0.5 0.5 L6.5 5 L0.5 9.5 Z" fill="#2b78ad"/></svg>
<div class="t" style="left:1036.5px;top:12.5px;font-size:11px;font-weight:bold;color:#2b78ad;letter-spacing:-0.2px">Run</div>
<svg class="a" style="left:1079px;top:12px" width="13" height="11" viewBox="0 0 13 11"><rect x="0.7" y="0.7" width="11.6" height="9.6" rx="1.5" fill="none" stroke="#555" stroke-width="1.2"/><path d="M9 3 v5" stroke="#555" stroke-width="1.2"/></svg>
<svg class="a" style="left:1104px;top:12px" width="11" height="11" viewBox="0 0 11 11"><path d="M6.5 0.8 h3.7 v3.7 M10 1 L6.3 4.7 M4.5 10.2 h-3.7 v-3.7 M1 10 L4.7 6.3" stroke="#555" stroke-width="1.2" fill="none"/></svg>
<div class="t" style="left:230px;top:52px;font-size:11px;color:#555;letter-spacing:-0.1px">Resource</div>
<div class="a" style="left:283px;top:44.5px;width:590.5px;height:26px;background:#f8fbfd;border:1px solid #7fb2d2;border-radius:5px"></div>
<svg class="a" style="left:297px;top:51px" width="8" height="13" viewBox="0 0 8 13"><path d="M4 0.3 C6.8 2.8 7.6 5.5 7.2 7.8 C6.8 10 5.4 11.2 4.3 11.7 L4.1 12.9 L3.8 12.9 L3.7 11.7 C2.5 11.2 1.1 10 0.8 7.8 C0.4 5.5 1.2 2.8 4 0.3 Z" fill="#10613f"/><path d="M4 1.5 V12" stroke="#3aa36b" stroke-width="0.6"/></svg>
<div class="t" style="left:314.8px;top:52px;font-size:11px;color:#8a8a8a;letter-spacing:-0.14px">[Resource Templates] / <span style="color:#1f1f1f;font-weight:bold;letter-spacing:-0.63px">[Playground Resource] MongoDB</span></div>
<div class="a" style="left:817.5px;top:49px;width:30px;height:16.5px;background:#fff;border:1px solid #e8e8e8;border-radius:4px"></div>
<div class="t" style="left:823px;top:52px;font-size:11px;color:#555;letter-spacing:-0.1px">Edit</div>
<svg class="a" style="left:860px;top:56px" width="7" height="5" viewBox="0 0 7 5"><path d="M1 1 L3.5 3.5 L6 1" fill="none" stroke="#9a9a9a" stroke-width="1"/></svg>
<div class="t" style="left:885px;top:50px;font-family:'Liberation Serif',serif;font-style:italic;font-size:12px;color:#c2c2c2">f<span style="font-size:9px">x</span></div>
<div class="a" style="left:230px;top:81px;width:666.5px;height:26.5px;background:#fff;border:1px solid #e3e3e3;border-radius:5px"></div>
<div class="t" style="left:240px;top:89px;font-size:11px;color:#3f3f3f;letter-spacing:-0.1px">Run query automatically when inputs change</div>
<svg class="a" style="left:883px;top:93px" width="7" height="5" viewBox="0 0 7 5"><path d="M1 1 L3.5 3.5 L6 1" fill="none" stroke="#9a9a9a" stroke-width="1"/></svg>
<div class="a" style="left:694px;top:69.5px;width:207.5px;height:17px;background:#e6e6e6;border-radius:3px;box-shadow:0 1px 3px rgba(0,0,0,.18)"></div>
<div class="t" style="left:700px;top:73.5px;font-size:10px;color:#3b3b3b;letter-spacing:-0.12px">[Playground Resource] MongoDB (mongodb)</div>
<div class="a" style="left:230px;top:120px;width:667px;height:1px;background:#ececec"></div>
<div class="t r" style="left:243px;top:142.19999999999993px;width:100px;font-size:11px;color:#555;letter-spacing:-0.1px">Action type</div>
<div class="a" style="left:350px;top:134.79999999999995px;width:546.5px;height:26px;background:#fff;border:1px solid #e3e3e3;border-radius:5px"></div>
<div class="t" style="left:359.8px;top:142.19999999999993px;font-size:11px;color:#3f3f3f;letter-spacing:0.05px">find</div>
<div class="t r" style="left:243px;top:178.79999999999995px;width:100px;font-size:11px;color:#555;letter-spacing:-0.1px">Database</div>
<div class="a" style="left:350px;top:171.39999999999998px;width:530px;height:26px;background:#fff;border:1px solid #e3e3e3;border-radius:5px"></div>
<div class="t" style="left:359.8px;top:178.79999999999995px;font-size:11px;color:#3f3f3f;letter-spacing:0.05px">retool-cloud-demo-mongodb</div>
<svg class="a" style="left:868px;top:182.39999999999998px" width="7" height="5" viewBox="0 0 7 5"><path d="M1 1 L3.5 3.5 L6 1" fill="none" stroke="#9a9a9a" stroke-width="1"/></svg>
<div class="t" style="left:885px;top:177.39999999999998px;font-family:'Liberation Serif',serif;font-style:italic;font-size:12px;color:#c2c2c2">f<span style="font-size:9px">x</span></div>
<div class="t r" style="left:243px;top:215.19999999999993px;width:100px;font-size:11px;color:#555;letter-spacing:-0.1px">Collection</div>
<div class="a" style="left:350px;top:207.79999999999995px;width:530px;height:26px;background:#fff;border:1px solid #e3e3e3;border-radius:5px"></div>
<div class="t" style="left:359.8px;top:215.19999999999993px;font-size:11px;color:#3f3f3f;letter-spacing:0.05px">customers</div>
<svg class="a" style="left:868px;top:218.79999999999995px" width="7" height="5" viewBox="0 0 7 5"><path d="M1 1 L3.5 3.5 L6 1" fill="none" stroke="#9a9a9a" stroke-width="1"/></svg>
<div class="t" style="left:885px;top:213.79999999999995px;font-family:'Liberation Serif',serif;font-style:italic;font-size:12px;color:#c2c2c2">f<span style="font-size:9px">x</span></div>
<div class="a" style="left:794px;top:138.29999999999995px;width:77px;height:18.5px;background:#fff;border:1px solid #e6e6e6;border-radius:4px"></div>
<div class="t" style="left:800px;top:142px;font-size:11px;color:#444;letter-spacing:-0.1px">View docs</div>
<svg class="a" style="left:854.5px;top:141.5px" width="11" height="11" viewBox="0 0 11 11"><path d="M4.5 1.5 H1.3 V9.7 H9.5 V6.5 M6.5 1 H10 V4.5 M10 1 L5 6" fill="none" stroke="#555" stroke-width="1.2"/></svg>
<svg class="a" style="left:884px;top:146px" width="7" height="5" viewBox="0 0 7 5"><path d="M1 1 L3.5 3.5 L6 1" fill="none" stroke="#9a9a9a" stroke-width="1"/></svg>
<div class="t" style="left:350px;top:245.5px;font-size:11px;color:#cfcfcf;letter-spacing:0.35px">Retool uses MongoDB's Extended JSON syntax. See documentation for details.</div>
<div class="a" style="left:910.5px;top:34px;width:221px;height:216px;background:#f7f7f7;border-left:1px solid #ebebeb"></div>
<div class="a" style="left:921.5px;top:53px;width:167.5px;height:22.5px;background:#fff;border:1px solid #e2e2e2;border-radius:5px"></div>
<svg class="a" style="left:928.5px;top:57.5px" width="13" height="13" viewBox="0 0 13 13"><circle cx="5.5" cy="5.5" r="4.5" fill="none" stroke="#aaa" stroke-width="1.1"/><line x1="8.8" y1="8.8" x2="12" y2="12" stroke="#aaa" stroke-width="1.1"/></svg>
<div class="t" style="left:949px;top:58px;font-size:11px;color:#adadad;letter-spacing:-0.14px">Search collections or colu...</div>
<div class="a" style="left:1098px;top:53px;width:21.5px;height:22.5px;background:#fff;border:1px solid #e2e2e2;border-radius:5px"></div>
<svg class="a" style="left:1102.5px;top:58px" width="12" height="12" viewBox="0 0 12 12"><path d="M2 5 A4 4 0 0 1 9.5 3.5 M10 7 A4 4 0 0 1 2.5 8.5" fill="none" stroke="#555" stroke-width="1.3"/><path d="M8 1.5 L10 3.8 L7.5 4.8 M4 10.5 L2 8.2 L4.5 7.2" fill="none" stroke="#555" stroke-width="1.2"/></svg>
<div class="t" style="left:922px;top:90px;font-size:11px;color:#777;letter-spacing:0">All collections</div>
<div class="a" style="left:992.5px;top:90.5px;width:10px;height:10px;border-radius:5px;background:#e3e3e3"></div>
<div class="t" style="left:995px;top:91.5px;font-size:8px;font-weight:bold;color:#fff">?</div>
<svg class="a" style="left:924px;top:113.5px" width="7" height="5" viewBox="0 0 7 5"><path d="M0.5 0.5 H6.5 L3.5 4.5 Z" fill="#555"/></svg>
<div class="t" style="left:938px;top:110px;font-size:11px;font-weight:bold;color:#222;letter-spacing:-0.35px">retool-cloud-demo-mongodb...</div>
<div class="t" style="left:938px;top:128.70000000000005px;font-size:11px;color:#2b2b2b;letter-spacing:-0.15px">_id</div>
<div class="a" style="left:1066.4px;top:129px;width:53.6px;height:17px;background:#f2f2f2;border:1px solid #ececec;border-radius:5px"></div>
<div class="t" style="left:1070.4px;top:131.20000000000005px;font-family:'Liberation Mono',monospace;font-size:9.5px;color:#6a6a6a">objectid</div>
<div class="t" style="left:938px;top:148.70000000000005px;font-size:11px;color:#2b2b2b;letter-spacing:-0.15px">active_license_growth</div>
<div class="a" style="left:1077.8px;top:149px;width:42.2px;height:17px;background:#f2f2f2;border:1px solid #ececec;border-radius:5px"></div>
<div class="t" style="left:1081.8px;top:151.20000000000005px;font-family:'Liberation Mono',monospace;font-size:9.5px;color:#6a6a6a">number</div>
<div class="t" style="left:938px;top:168.70000000000005px;font-size:11px;color:#2b2b2b;letter-spacing:-0.15px">active_licenses</div>
<div class="a" style="left:1077.8px;top:169px;width:42.2px;height:17px;background:#f2f2f2;border:1px solid #ececec;border-radius:5px"></div>
<div class="t" style="left:1081.8px;top:171.20000000000005px;font-family:'Liberation Mono',monospace;font-size:9.5px;color:#6a6a6a">number</div>
<div class="t" style="left:938px;top:188.70000000000005px;font-size:11px;color:#2b2b2b;letter-spacing:-0.15px">customer_name</div>
<div class="a" style="left:1077.8px;top:189px;width:42.2px;height:17px;background:#f2f2f2;border:1px solid #ececec;border-radius:5px"></div>
<div class="t" style="left:1081.8px;top:191.20000000000005px;font-family:'Liberation Mono',monospace;font-size:9.5px;color:#6a6a6a">string</div>
<div class="t" style="left:938px;top:208.70000000000005px;font-size:11px;color:#2b2b2b;letter-spacing:-0.15px">id</div>
<div class="a" style="left:1077.8px;top:209px;width:42.2px;height:17px;background:#f2f2f2;border:1px solid #ececec;border-radius:5px"></div>
<div class="t" style="left:1081.8px;top:211.20000000000005px;font-family:'Liberation Mono',monospace;font-size:9.5px;color:#6a6a6a">number</div>
<div class="t" style="left:938px;top:228.70000000000005px;font-size:11px;color:#2b2b2b;letter-spacing:-0.15px">industry</div>
<div class="a" style="left:1077.8px;top:229px;width:42.2px;height:17px;background:#f2f2f2;border:1px solid #ececec;border-radius:5px"></div>
<div class="t" style="left:1081.8px;top:231.20000000000005px;font-family:'Liberation Mono',monospace;font-size:9.5px;color:#6a6a6a">string</div>
</div>
<div class="a" style="left:0;top:754px;width:1400px;height:20px;background:#fff;border-top:1px solid #e4e4e4"></div>
<div class="a" style="left:2px;top:754px;width:72px;height:20px;background:#3b8dd8"></div>
<div class="a" style="left:8.8px;top:761px;width:6px;height:6px;border-radius:3px;background:#245e97"></div>
<div class="t" style="left:20px;top:760px;font-size:10px;font-weight:bold;color:#fff;letter-spacing:-0.45px">production</div>
<svg class="a" style="left:81px;top:758px" width="12" height="12" viewBox="0 0 12 12"><path d="M1 1 H5.5 L11 6.5 L6.5 11 L1 5.5 Z" fill="none" stroke="#888" stroke-width="1.1" stroke-linejoin="round"/><circle cx="3.7" cy="3.7" r="0.9" fill="#888"/></svg>
<div class="t" style="left:95.5px;top:760px;font-size:10px;color:#8a8a8a;letter-spacing:0">Latest</div>
<svg class="a" style="left:140px;top:759px" width="11" height="10" viewBox="0 0 11 10"><rect x="0.6" y="0.6" width="9.8" height="8.8" rx="1" fill="none" stroke="#888" stroke-width="1.1"/><path d="M4 0.6 V9.4 M4 5 H10.4" stroke="#888" stroke-width="1.1"/></svg>
<div class="t" style="left:153px;top:760px;font-size:10px;color:#8a8a8a;letter-spacing:-0.25px">IDE Legacy</div>
<div class="t" style="left:646px;top:760px;font-size:10px;color:#8a8a8a;letter-spacing:-0.1px">No queries running</div>
<svg class="a" style="left:736px;top:759px" width="10" height="10" viewBox="0 0 10 10"><path d="M1.5 4.5 A3.5 3.5 0 0 1 8 3 M8.5 5.5 A3.5 3.5 0 0 1 2 7" fill="none" stroke="#888" stroke-width="1.1"/><path d="M6.5 1 L8.3 3.2 L6 4 M3.5 9 L1.7 6.8 L4 6" fill="none" stroke="#888" stroke-width="1"/></svg>
<svg class="a" style="left:1330px;top:758px" width="10" height="12" viewBox="0 0 10 12"><path d="M3.5 1.5 h3" stroke="#666" stroke-width="1.2"/><rect x="2.2" y="3.5" width="5.6" height="7" rx="1" fill="none" stroke="#666" stroke-width="1.2"/><path d="M0.2 5.5 h9.6 M0.2 8.3 h9.6 M5 3.5 v7" stroke="#666" stroke-width="1"/></svg>
<svg class="a" style="left:1352.5px;top:758.5px" width="11" height="11" viewBox="0 0 11 11"><path d="M1.5 3.5 A4.5 4.5 0 1 1 1 6" fill="none" stroke="#777" stroke-width="1.1"/><path d="M0.8 1 V3.8 H3.6" fill="none" stroke="#777" stroke-width="1.1"/><path d="M5.5 3.2 V5.8 L7.2 7" fill="none" stroke="#777" stroke-width="1"/></svg>
<svg class="a" style="left:1376.5px;top:758.5px" width="11" height="11" viewBox="0 0 11 11"><circle cx="5.5" cy="5.5" r="4.8" fill="none" stroke="#777" stroke-width="1.1"/><path d="M3.8 4.2 A1.7 1.7 0 1 1 5.5 6 V6.8" fill="none" stroke="#777" stroke-width="1.1"/><circle cx="5.5" cy="8.4" r="0.6" fill="#777"/></svg>
<div class="a" style="left:1390px;top:764px;width:10px;height:10px;background:radial-gradient(circle at 0 0,transparent 9.3px,#c9a9a0 9.8px,#5a1812 10.8px)"></div>
<div class="a" style="left:0;top:0;width:2px;height:774px;background:linear-gradient(#b8862e,#b07a3a 40%,#a05a3a 60%,#6a2a1a 72%,#2a0f0a 88%,#111)"></div>
<div class="a" style="left:2px;top:504px;width:8px;height:250px;background:linear-gradient(to right,#f2f2f2,rgba(255,255,255,0))"></div>
<div class="a" style="left:2px;top:766px;width:8px;height:8px;background:radial-gradient(circle at 100% 0,transparent 7px,#0d0d0d 8px)"></div></body></html>
